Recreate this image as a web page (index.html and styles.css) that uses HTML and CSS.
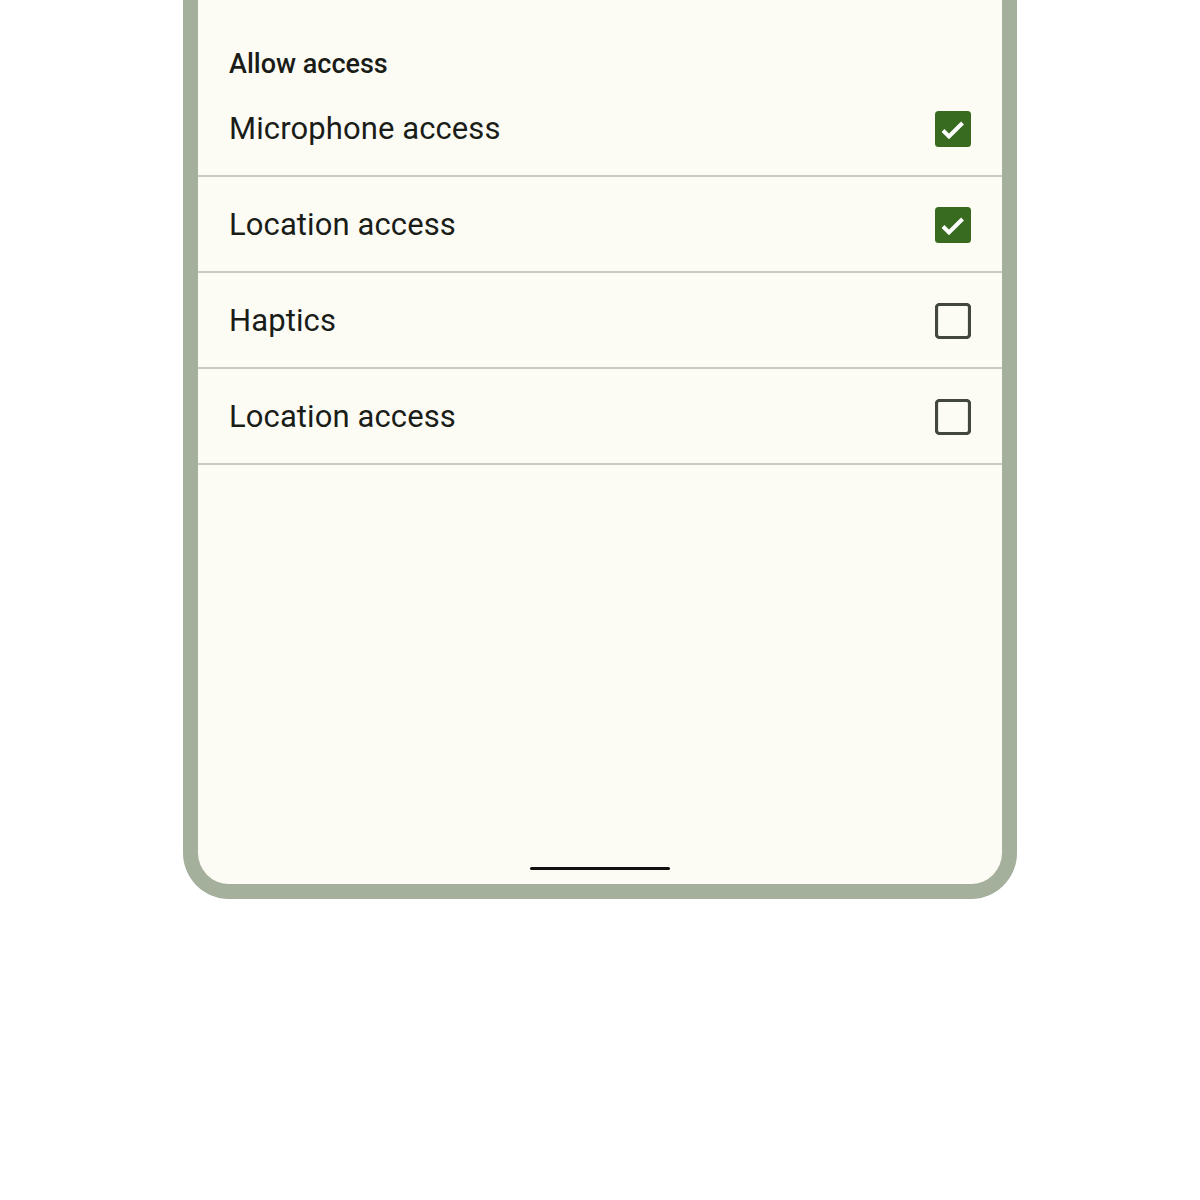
FILE: index.html
```html
<!DOCTYPE html>
<html>
<head>
<meta charset="utf-8">
<link rel="stylesheet" href="styles.css">
</head>
<body>
<div class="phone">
  <div class="screen">
    <div class="header">Allow access</div>
    <div class="list">
      <div class="row"><span class="label">Microphone access</span>
        <svg class="cb" width="36" height="36" viewBox="0 0 36 36"><rect x="0" y="0" width="36" height="36" rx="3.5" fill="#386a20"/><polyline points="8,19.5 14,25.5 27.5,12" fill="none" stroke="#fff" stroke-width="4"/></svg>
      </div>
      <div class="row"><span class="label">Location access</span>
        <svg class="cb" width="36" height="36" viewBox="0 0 36 36"><rect x="0" y="0" width="36" height="36" rx="3.5" fill="#386a20"/><polyline points="8,19.5 14,25.5 27.5,12" fill="none" stroke="#fff" stroke-width="4"/></svg>
      </div>
      <div class="row"><span class="label">Haptics</span>
        <svg class="cb" width="36" height="36" viewBox="0 0 36 36"><rect x="1.5" y="1.5" width="33" height="33" rx="3" fill="none" stroke="#43483e" stroke-width="3.2"/></svg>
      </div>
      <div class="row"><span class="label">Location access</span>
        <svg class="cb" width="36" height="36" viewBox="0 0 36 36"><rect x="1.5" y="1.5" width="33" height="33" rx="3" fill="none" stroke="#43483e" stroke-width="3.2"/></svg>
      </div>
    </div>
    <div class="spacer"></div>
    <div class="home"></div>
  </div>
</div>
</body>
</html>
```

FILE: styles.css
```css
html, body {
  margin: 0;
  padding: 0;
  background: #ffffff;
}
body {
  font-family: Roboto, "Liberation Sans", sans-serif;
  color: #1a1c18;
}
.phone {
  width: 834px;
  height: 899px;
  margin-left: 183px;
  box-sizing: border-box;
  background: #a4af9c;
  padding: 0 15px 15px 15px;
  border-radius: 0 0 46px 46px;
}
.screen {
  height: 884px;
  background: #fcfcf4;
  border-radius: 0 0 31px 31px;
  display: flex;
  flex-direction: column;
}
.header {
  padding: 48px 31px 0 31px;
  height: 32px;
  line-height: 32px;
  font-size: 27px;
  font-weight: 500;
  margin-bottom: 1px;
}
.list {
  display: flex;
  flex-direction: column;
}
.row {
  height: 94px;
  border-bottom: 2px solid #c8cbc1;
  display: flex;
  align-items: center;
  justify-content: space-between;
  padding: 0 31px 0 31px;
}
.label {
  font-size: 31px;
  letter-spacing: 0.1px;
}
.cb {
  display: block;
  margin-top: 2px;
}
.spacer {
  flex: 1;
}
.home {
  align-self: center;
  width: 140px;
  height: 3px;
  border-radius: 2px;
  background: #111;
  margin-bottom: 14px;
}
```
